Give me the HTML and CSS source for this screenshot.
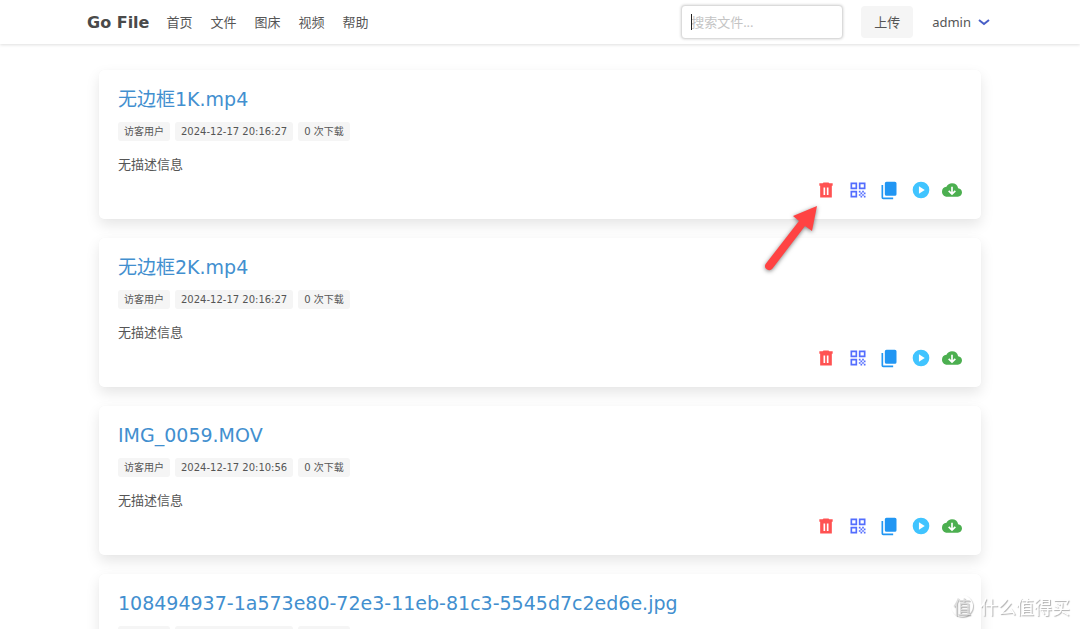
FILE: index.html
```html
<!DOCTYPE html>
<html lang="zh">
<head>
  <meta charset="UTF-8" />
  <meta name="viewport" content="width=device-width, initial-scale=1.0"/>
  <title>Go File</title>
  <link rel="stylesheet" href="styles.css">
</head>
<body>

  <!-- Icons shared by all file cards -->
  <svg class="icon-defs" aria-hidden="true">
    <symbol id="icon-trash" viewBox="0 0 24 24">
      <path fill="#ff5252" fill-rule="evenodd" d="M9 3h6l1 1h4v3h-1V21H5V7H4V4h4zM9 9v9h2V9zm4 0v9h2V9z"/>
    </symbol>
    <symbol id="icon-qrcode" viewBox="0 0 24 24">
      <path fill="#536dfe" fill-rule="evenodd" d="M3 3h8v8H3zm2 2v4h4V5zM13 3h8v8h-8zm2 2v4h4V5zM3 13h8v8H3zm2 2v4h4v-4zM13 13h2v2h-2zM15 15h2v2h-2zM17 13h2v2h-2zM19 15h2v2h-2zM17 17h2v2h-2zM13 17h2v2h-2zM15 19h2v2h-2zM19 19h2v2h-2z"/>
    </symbol>
    <symbol id="icon-copy" viewBox="0 0 24 24">
      <path fill="#2196f3" d="M9 2h10a2 2 0 0 1 2 2v13a2 2 0 0 1-2 2H9a2 2 0 0 1-2-2V4a2 2 0 0 1 2-2zM3 6h2v15h12v2H5a2 2 0 0 1-2-2z"/>
    </symbol>
    <symbol id="icon-play" viewBox="0 0 24 24">
      <circle cx="12" cy="12" r="10" fill="#40c4ff"/>
      <path fill="#fff" d="M9.500 7.500v9l7-4.500z"/>
    </symbol>
    <symbol id="icon-download" viewBox="0 0 24 24">
      <path fill="#4caf50" d="M19.350 10.040A7.490 7.490 0 0 0 12 4C9.110 4 6.600 5.640 5.350 8.040A5.994 5.994 0 0 0 0 14c0 3.310 2.690 6 6 6h13c2.760 0 5-2.240 5-5 0-2.640-2.050-4.780-4.650-4.960z"/>
      <path fill="none" stroke="#fff" stroke-width="2" d="M12 8v8.500M8 13l4 4 4-4"/>
    </symbol>
  </svg>

  <nav class="navbar">
    <div class="navbar-inner">
      <a class="brand" href="#">Go File</a>
      <a class="nav-link" href="#">首页</a>
      <a class="nav-link" href="#">文件</a>
      <a class="nav-link" href="#">图床</a>
      <a class="nav-link" href="#">视频</a>
      <a class="nav-link" href="#">帮助</a>
      <form class="search">
        <input class="search-input" type="text" placeholder="搜索文件..." aria-label="搜索文件" autofocus>
        <span class="caret"></span>
      </form>
      <button class="upload-btn" type="button">上传</button>
      <a class="user-menu" href="#">admin
        <svg class="chevron" viewBox="0 0 12 8"><path d="M1 2l5 4 5-4"/></svg>
      </a>
    </div>
  </nav>

  <main class="file-list" id="file-list"></main>

  <!-- Pointer to the delete icon -->
  <svg class="arrow" viewBox="0 0 70 80" aria-hidden="true">
    <path fill="#ff4343" d="M57 6L52 31L45 26L12.500 68.500A4 4 0 0 1 6 63.500L39 21L33 16z"/>
  </svg>

  <div class="watermark">
    <span class="watermark-logo">值</span>
    <span>什么值得买</span>
  </div>

  <script>
    const files = [
      { name: "无边框1K.mp4", time: "2024-12-17 20:16:27" },
      { name: "无边框2K.mp4", time: "2024-12-17 20:16:27" },
      { name: "IMG_0059.MOV", time: "2024-12-17 20:10:56" },
      { name: "108494937-1a573e80-72e3-11eb-81c3-5545d7c2ed6e.jpg", time: "2024-12-17 20:10:56" }
    ];
    const actions = [["trash", "删除"], ["qrcode", "二维码"], ["copy", "复制"], ["play", "播放"], ["download", "下载"]];

    document.getElementById("file-list").innerHTML = files.map(file => `
      <article class="card">
        <a class="file-name" href="#">${file.name}</a>
        <div class="tags">
          <span class="tag">访客用户</span>
          <span class="tag">${file.time}</span>
          <span class="tag">0 次下载</span>
        </div>
        <p class="description">无描述信息</p>
        <div class="actions">
          ${actions.map(([icon, label]) => `<button class="action" type="button" aria-label="${label}"><svg class="icon"><use href="#icon-${icon}"/></svg></button>`).join("")}
        </div>
      </article>`).join("");
  </script>
</body>
</html>
```
FILE: styles.css
```css
* {
  box-sizing: border-box;
}

body {
  margin: 0;
  background: #fff;
  color: #555;
  font-family: "DejaVu Sans", "Noto Sans CJK SC", sans-serif;
  font-size: 13px;
  line-height: 20px;
}

a {
  color: inherit;
  text-decoration: none;
}

button {
  border: none;
  font: inherit;
  color: inherit;
  cursor: pointer;
}

.icon-defs {
  display: none;
}

.navbar {
  height: 44px;
  box-shadow: 0 1px 3px rgba(0,0,0,0.13);
  font-family: "Noto Sans", "Noto Sans CJK SC", sans-serif;
}

.navbar-inner {
  display: flex;
  align-items: center;
  height: 100%;
  max-width: 920px;
  margin: 0 auto;
  padding: 0 10px 0 7px;
}

.brand {
  margin-right: 8px;
  padding-top: 2px;
  color: #4a4a4a;
  font-family: "DejaVu Sans", sans-serif;
  font-size: 16px;
  font-weight: bold;
}

.nav-link {
  padding: 0 9px;
}

.search {
  position: relative;
  margin-left: auto;
}

.search-input {
  display: block;
  width: 162px;
  height: 34px;
  padding: 0 9px;
  border: 1px solid #dbdbdb;
  border-radius: 4px;
  box-shadow: 0 0 3px rgba(0,0,0,0.2);
  font: inherit;
  outline: none;
  caret-color: transparent;
}

.search-input::placeholder {
  color: #c4c4c4;
}

.caret {
  position: absolute;
  top: 9px;
  left: 10px;
  width: 1px;
  height: 16px;
  background: #222;
}

.upload-btn {
  height: 32px;
  margin: 0 19px 0 18px;
  padding: 0 13px;
  border-radius: 4px;
  background: #f5f5f5;
}

.user-menu {
  display: flex;
  align-items: center;
  gap: 7px;
}

.chevron {
  width: 12px;
  height: 8px;
  fill: none;
  stroke: #485fc7;
  stroke-width: 2;
}

.file-list {
  max-width: 920px;
  margin: 0 auto;
  padding: 26px 19px;
}

.card {
  margin-bottom: 19px;
  padding: 16px 19px 19px;
  border-radius: 5px;
  background: #fff;
  box-shadow: 0 6px 14px rgba(10,10,10,0.1), 0 0 1px rgba(10,10,10,0.04);
}

.file-name {
  display: block;
  color: #428fcf;
  font-size: 19px;
  line-height: 26px;
}

.tags {
  display: flex;
  gap: 5px;
  margin-top: 10px;
}

.tag {
  height: 19px;
  padding: 0 6px;
  border-radius: 3px;
  background: #f5f5f5;
  font-size: 10px;
  line-height: 19px;
}

.description {
  margin: 14px 0 5px;
}

.actions {
  display: flex;
  justify-content: space-between;
  width: 146px;
  margin-left: auto;
}

.action {
  display: flex;
  padding: 0;
  background: none;
}

.icon {
  width: 20px;
  height: 20px;
}

.arrow {
  position: absolute;
  top: 200px;
  left: 760px;
  width: 70px;
  height: 80px;
  filter: drop-shadow(0 1px 2px rgba(0,0,0,0.5));
}

.watermark {
  position: fixed;
  right: 10px;
  bottom: 11px;
  display: flex;
  align-items: center;
  gap: 7px;
  color: #fff;
  font-family: "Noto Sans CJK SC", sans-serif;
  font-size: 18px;
  line-height: 24px;
  text-shadow: 1px 1px 1px rgba(0,0,0,0.32);
}

.watermark-logo {
  width: 22px;
  height: 22px;
  border-radius: 50%;
  box-shadow: 1px 1px 1px rgba(0,0,0,0.25);
  color: #ddd;
  line-height: 22px;
  text-align: center;
}
```
